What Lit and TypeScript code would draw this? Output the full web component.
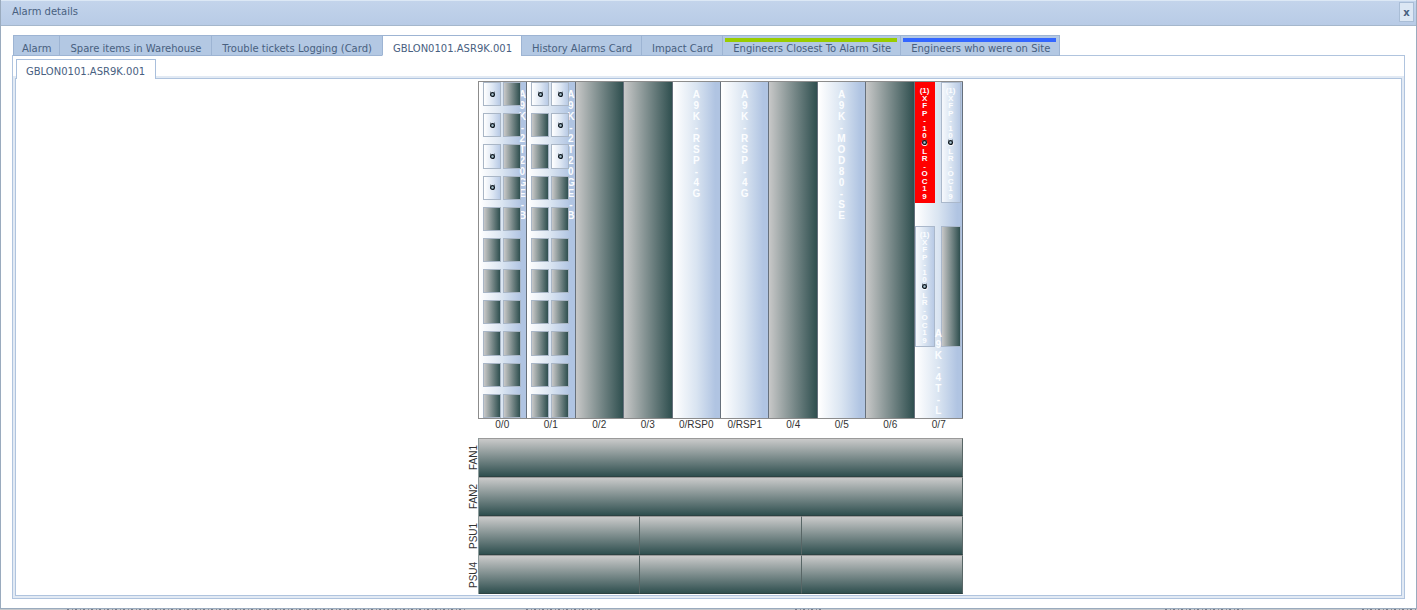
import { LitElement, html, css, nothing } from "lit";
import { customElement, property, state } from "lit/decorators.js";
import { classMap } from "lit/directives/class-map.js";

interface Tab { label: string; mark?: string }
interface Slot { name: string; kind: "empty" | "card" | "ports" | "optics"; card?: string; live?: number[] }

const TABS: Tab[] = [
  { label: "Alarm" },
  { label: "Spare items in Warehouse" },
  { label: "Trouble tickets Logging (Card)" },
  { label: "GBLON0101.ASR9K.001" },
  { label: "History Alarms Card" },
  { label: "Impact Card" },
  { label: "Engineers Closest To Alarm Site", mark: "green" },
  { label: "Engineers who were on Site", mark: "blue" },
];

const SLOTS: Slot[] = [
  { name: "0/0", kind: "ports", card: "A9K-2T20GE-B", live: [0, 2, 4, 6] },
  { name: "0/1", kind: "ports", card: "A9K-2T20GE-B", live: [0, 1, 3, 5] },
  { name: "0/2", kind: "empty" },
  { name: "0/3", kind: "empty" },
  { name: "0/RSP0", kind: "card", card: "A9K-RSP-4G" },
  { name: "0/RSP1", kind: "card", card: "A9K-RSP-4G" },
  { name: "0/4", kind: "empty" },
  { name: "0/5", kind: "card", card: "A9K-MOD80-SE" },
  { name: "0/6", kind: "empty" },
  { name: "0/7", kind: "optics", card: "A9K-4T-L" },
];

const OPTIC = ["(1)", ..."XFP-10GLR-OC19"];

const jack = html`<svg class="jack" viewBox="0 0 7 7" width="7" height="7" aria-hidden="true">
  <circle cx="3.5" cy="3.5" r="1.9" fill="#a9c6d2" stroke="#101820" stroke-width="1.3"/>
  <path d="M1 1.2h1M5 1.2h1" stroke="#46555f" stroke-width="1"/>
</svg>`;

@customElement("chassis-slot")
export class ChassisSlot extends LitElement {
  @property({ attribute: false }) slotData!: Slot;

  static styles = css`
    :host {
      display: block;
      position: relative;
      min-width: 0;
      border-right: 1px solid #66707c;
      box-sizing: border-box;
      overflow: hidden;
      font-family: "Liberation Sans", Arial, sans-serif;
    }
    .face { height: 100%; box-sizing: border-box; }
    .empty { background: linear-gradient(90deg, #c8c8c8, #2f4f4f); }
    .card, .ports, .optics { background: linear-gradient(90deg, #fff 2%, #d9e4f1 50%, #b0c4e2 90%); }
    .name {
      position: absolute;
      top: 7px;
      left: 0;
      right: 0;
      display: flex;
      flex-direction: column;
      align-items: center;
      font: bold 10px/11px "Liberation Sans", Arial, sans-serif;
      color: #fbfdff;
    }
    .name.edge { left: auto; right: 0; width: 8px; }
    .name.low { top: auto; bottom: 2px; }
    .ports {
      display: grid;
      grid-template-columns: 18px 18px;
      grid-template-rows: repeat(11, 1fr);
      gap: 7px 2px;
      padding-left: 4px;
    }
    .port {
      position: relative;
      display: grid;
      place-items: center;
      border: 1px solid #a9b6c6;
      background: linear-gradient(90deg, #c8c8c8, #2f4f4f);
    }
    .live { background: linear-gradient(90deg, #fff, #dce6f3 55%, #b8cae5); }
    .jack { display: block; }
    .optics {
      display: grid;
      grid-template-columns: 20px 20px;
      grid-template-rows: 121px 121px;
      gap: 23px 6px;
    }
    .optic {
      display: grid;
      grid-template-rows: 100%;
      place-items: center;
      box-sizing: border-box;
      border: 1px solid #aab8cb;
      background: linear-gradient(90deg, #f7f9fd, #d9e4f1 50%, #b8cae5);
    }
    .alarm { background: #f00; border-color: #f00; }
    .vacant { background: linear-gradient(90deg, #c8c8c8, #2f4f4f); }
    .optic > * { grid-area: 1 / 1; }
    .type {
      display: flex;
      flex-direction: column;
      justify-content: space-between;
      align-items: center;
      box-sizing: border-box;
      height: 100%;
      padding: 4px 0 2px;
      font: bold 8px/7px "Liberation Sans", Arial, sans-serif;
      color: #fbfdff;
    }
  `;

  private letters(text: string, extra = "") {
    return html`<div class="name ${extra}">${[...text].map((c) => html`<span>${c}</span>`)}</div>`;
  }

  private optic(kind: string) {
    return html`<div class="optic ${kind}">
      ${kind === "vacant" ? nothing : html`<div class="type">${OPTIC.map((c) => html`<span>${c}</span>`)}</div>${jack}`}
    </div>`;
  }

  render() {
    const s = this.slotData;
    if (s.kind === "ports") {
      return html`<div class="face ports">
        ${this.letters(s.card!, "edge")}
        ${Array.from({ length: 22 }, (_, i) => {
          const live = s.live!.includes(i);
          return html`<div class=${classMap({ port: true, live })}>${live ? jack : nothing}</div>`;
        })}
      </div>`;
    }
    if (s.kind === "optics") {
      return html`<div class="face optics">
        ${this.optic("alarm")}${this.optic("")}${this.optic("")}${this.optic("vacant")}
        ${this.letters(s.card!, "low")}
      </div>`;
    }
    return html`<div class="face ${s.kind}">${s.card ? this.letters(s.card) : nothing}</div>`;
  }
}

@customElement("app-root")
export class AppRoot extends LitElement {
  @state() private active = 3;

  static styles = css`
    :host {
      display: flex;
      flex-direction: column;
      min-height: 100vh;
      font: 10px/14px "DejaVu Sans", Verdana, sans-serif;
      color: #48607f;
      background: #fff;
    }
    button { font: inherit; color: inherit; margin: 0; border-radius: 0; white-space: nowrap; }
    .dialog {
      flex: 1;
      display: flex;
      flex-direction: column;
      border: 1px solid #9aabbe;
      border-top: 0;
    }
    .title {
      display: flex;
      justify-content: space-between;
      align-items: flex-start;
      box-sizing: border-box;
      height: 26px;
      padding: 1px 2px 0 11px;
      border-top: 1px solid #dce8f5;
      border-bottom: 1px solid #a5b7cc;
      background: linear-gradient(#c3d4eb, #b8cbe6);
    }
    .heading { margin: 0; padding-top: 3px; font: inherit; }
    .close {
      width: 15px;
      height: 20px;
      padding: 1px 0 0;
      border: 1px solid #a9bdd6;
      background: #dce7f4;
      font-weight: bold;
      line-height: 12px;
    }
    .body { flex: 1; display: flex; flex-direction: column; padding: 9px 11px; }
    .tabs { display: flex; padding-left: 1px; }
    .tab {
      position: relative;
      height: 21px;
      padding: 6px 10px 0;
      border: 1px solid #9db4d3;
      border-right-width: 0;
      background: #b3c8e3;
      line-height: 13px;
    }
    .tab:first-child { padding: 6px 8px 0; }
    .tab:last-child { border-right-width: 1px; }
    .tab.active { background: #fff; border-bottom-color: #fff; }
    .tab.active, .tab.active ~ .tab { padding-right: 9px; }
    .mark { position: absolute; top: 2px; left: 2px; right: 3px; height: 4px; }
    .green { background: #99cc00; }
    .blue { background: #3366ff; }
    .outer {
      flex: 1;
      display: flex;
      flex-direction: column;
      margin-top: -1px;
      padding: 3px 2px 2px;
      border: 1px solid #b0c4de;
    }
    .inner-tabs { display: flex; padding-left: 1px; position: relative; z-index: 1; }
    .inner-tab {
      height: 20px;
      padding: 4px 10px 0 9px;
      border: 1px solid #a9bfdc;
      border-bottom: 0;
      background: #fff;
    }
    .inner {
      flex: 1;
      margin-top: -1px;
      padding: 2px 0 0;
      border: 1px solid #b0c4de;
      box-shadow: 0 0 0 2px #e2eaf4;
      display: grid;
      grid-template-columns: 24px minmax(0, 485px);
      grid-template-rows: 338px 19px repeat(4, 39px);
      justify-content: center;
      align-content: start;
      font: 10px/11px "Liberation Sans", Arial, sans-serif;
      color: #333;
    }
    .slots, .names { grid-column: 2; display: grid; grid-template-columns: repeat(10, minmax(0, 1fr)); }
    .slots { border: 1px solid #8c8c8c; border-right: 0; box-sizing: border-box; }
    .names { text-align: center; }
    .side {
      writing-mode: vertical-rl;
      transform: rotate(180deg);
      justify-self: end;
      text-align: center;
      line-height: 9px;
    }
    .row { display: flex; border-left: 1px solid #8c9a9a; }
    .unit {
      flex: 1;
      box-sizing: border-box;
      background: linear-gradient(#cacaca, #2f4f4f);
      border-right: 1px solid #586666;
      border-bottom: 1px solid #2c4242;
      border-top: 1px solid #9a9a9a;
    }
    .behind {
      height: 1px;
      background: #c6c9cc;
      display: grid;
      grid-template-columns: 67fr 400fr 59fr 76fr 193fr 27fr 343fr 80fr 117fr 55fr;
    }
    .behind > :nth-child(even) { background: repeating-linear-gradient(90deg, #777b88 0 2px, #c6c9cc 2px 5px, #8a8a94 5px 6px, #c6c9cc 6px 8px); }
  `;

  private row(label: string, units: number) {
    return html`<div class="side">${label}</div>
      <div class="row">${Array.from({ length: units }, () => html`<div class="unit"></div>`)}</div>`;
  }

  render() {
    return html`
      <section class="dialog" role="dialog" aria-labelledby="heading">
        <header class="title">
          <h1 class="heading" id="heading">Alarm details</h1>
          <button class="close" aria-label="Close">x</button>
        </header>
        <div class="body">
          <div class="tabs" role="tablist">
            ${TABS.map((t, i) => html`<button
              class=${classMap({ tab: true, active: i === this.active })}
              role="tab"
              aria-selected=${i === this.active ? "true" : "false"}
              @click=${() => (this.active = i)}
            >${t.mark ? html`<span class="mark ${t.mark}"></span>` : nothing}${t.label}</button>`)}
          </div>
          <div class="outer">
            <div class="inner-tabs" role="tablist">
              <button class="inner-tab" role="tab" aria-selected="true">GBLON0101.ASR9K.001</button>
            </div>
            <div class="inner" role="tabpanel">
              <div class="slots">${SLOTS.map((s) => html`<chassis-slot .slotData=${s}></chassis-slot>`)}</div>
              <div class="names">${SLOTS.map((s) => html`<span>${s.name}</span>`)}</div>
              ${this.row("FAN1", 1)}${this.row("FAN2", 1)}${this.row("PSU1", 3)}${this.row("PSU4", 3)}
            </div>
          </div>
        </div>
      </section>
      <div class="behind" aria-hidden="true">${Array.from({ length: 10 }, () => html`<i></i>`)}</div>
    `;
  }
}
